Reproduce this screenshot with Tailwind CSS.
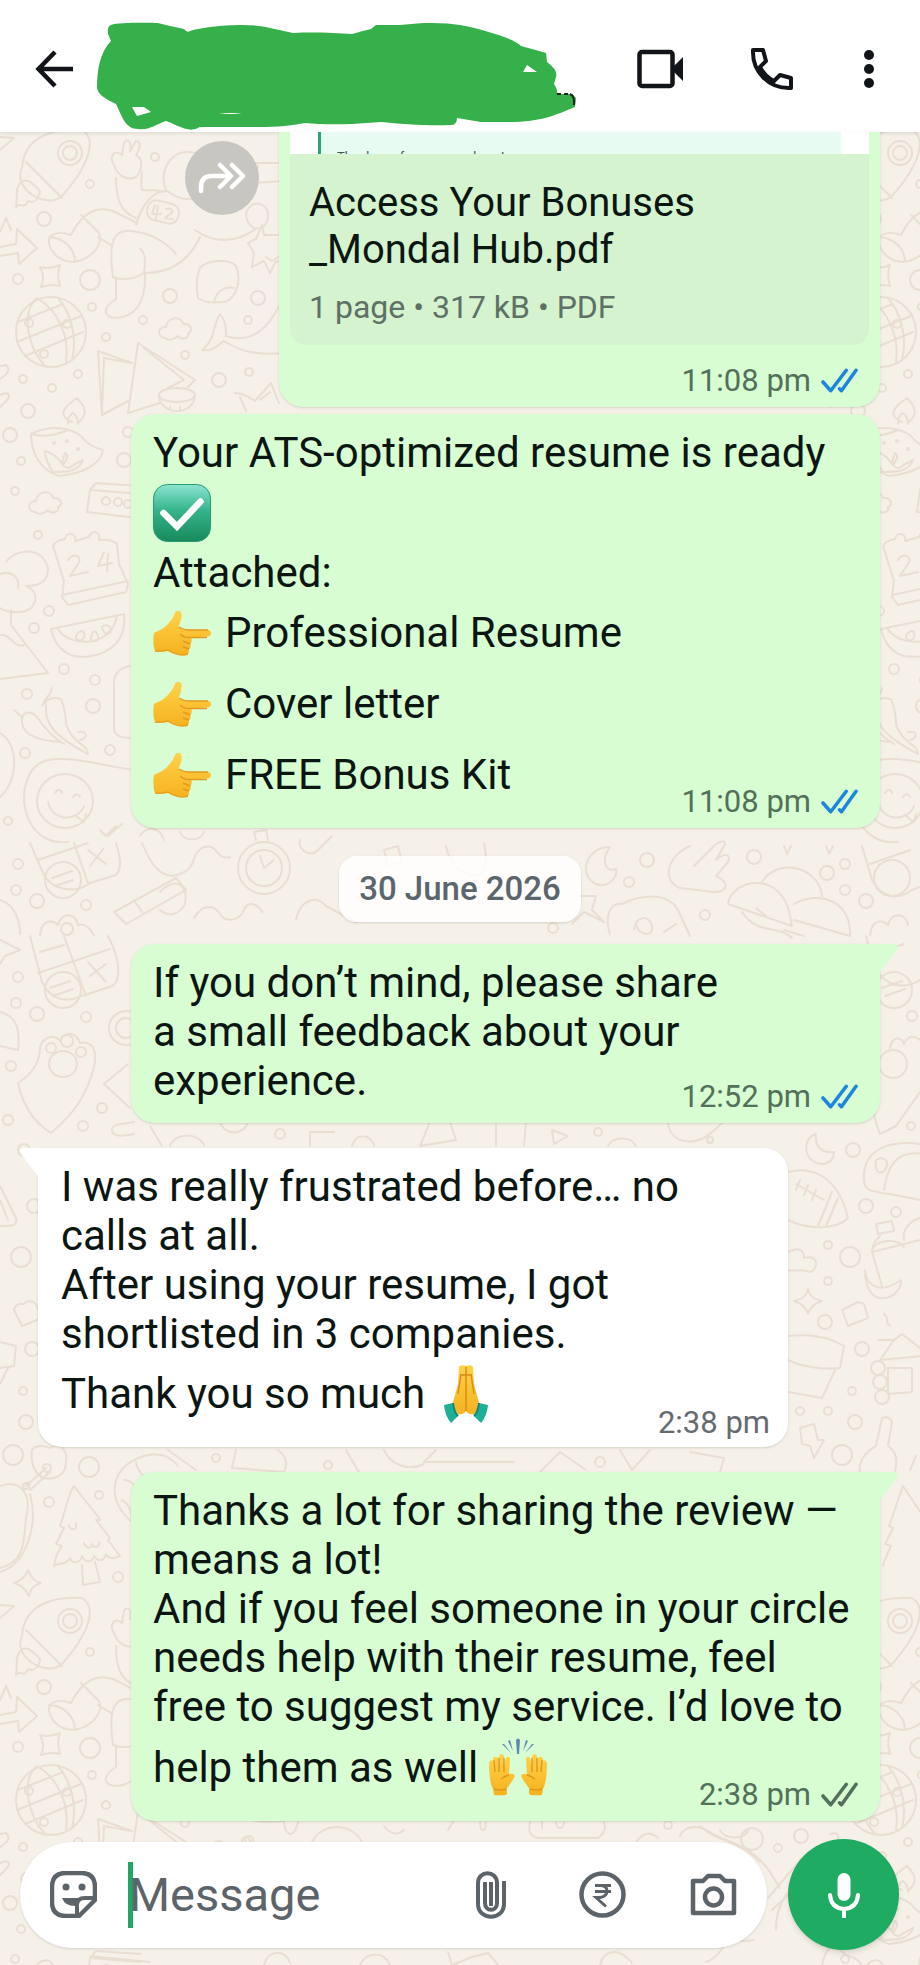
<!DOCTYPE html>
<html lang="en">
<head>
  <meta charset="UTF-8">
  <meta name="viewport" content="width=device-width, initial-scale=1.0">
  <title>Chat</title>
  <script src="https://cdn.jsdelivr.net/npm/@tailwindcss/browser@4"></script>
</head>
<body class="bg-[#f5f1e8] font-['Roboto','Liberation_Sans',sans-serif] text-[#0b1612]">

  <!-- Shared shapes -->
  <svg class="absolute size-0" aria-hidden="true">
    <defs>
      <linearGradient id="tickBox" x1="0" y1="0" x2="0" y2="1">
        <stop offset="0" stop-color="#8ce5d0"/><stop offset=".45" stop-color="#35b48c"/><stop offset="1" stop-color="#178a5c"/>
      </linearGradient>
      <linearGradient id="skin" x1="0" y1="0" x2="0" y2="1">
        <stop offset="0" stop-color="#ffd24a"/><stop offset="1" stop-color="#f5b21f"/>
      </linearGradient>
      <symbol id="ticks" viewBox="0 0 38 26">
        <path d="M2 14l8 9L26 2M19 21l2 2L36 2" fill="none" stroke="currentColor" stroke-width="3.6" stroke-linejoin="round" stroke-linecap="round"/>
      </symbol>
      <symbol id="point" viewBox="0 0 58 58">
        <path d="M1 22C4 20 9 19 13 15 18 10 20 7 22 2 23-1 28-1 28.500 3 29 8 27 12 25.500 16 29 18 33 19 37 19H55C59 19 59 25 55 25.500L38 26.500C39 29 39 31 37.500 33 38 35 37.500 37 36 38.500 36 41 35.500 42 35 43 C32 45 22 44 15 40 10 40 5 42 2 40 0 35 0 27 1 22z" transform="translate(0 7)" fill="url(#skin)"/>
        <path d="M26 23c3 2 6 3 11 3h18M38 33.500H54M27 30c3 3 6 4 11 3.500M30 37l7 3M30 43l6 2" fill="none" stroke="#e09a22" stroke-width="1.400"/>
        <path d="M2 47c4 1 8 0 13-1 6 4 14 6 20 4" fill="none" stroke="#e8a220" stroke-width="1.500"/>
      </symbol>
      <symbol id="cloud" viewBox="0 0 36 26"><path d="M8 22c-8-1-8-11 1-11 1-10 15-12 17-3 9-1 10 8 5 9 2 6-8 7-10 3-4 4-10 5-13 2z" fill="none"/></symbol>

      <!-- doodle tile, repeated across the wallpaper -->
      <g id="tileTop">
        <path d="M22 168c2-32 32-40 60-38 14 8 10 32-20 66-16 14-50-8-40-28zm4-6l36 36M22 181c-8 8-4 14-6 26 6-6 8 4 12-6 8 4 12-6 12-10-6-6-10-12-18-10z"/>
        <circle cx="70" cy="153" r="12"/><circle cx="70" cy="153" r="7"/>
        <path d="M114 165c-6-10 2-16 8-10l2-12c4-6 8 0 6 8l6-10c6 0 4 8 0 14 8 4 6 16 0 22-8 4-18 0-22-12zM116 178c0 20 4 34 20 40M142 172c-1 8-1 14 0 18 8 1 16-1 22 2M136 225c6-22 18-34 30-34M166 190c-8-20 6-40 24-38 20 2 26 20 20 40-10 10-30 10-44-2z"/>
        <rect x="147" y="202" width="32" height="20" rx="9" transform="rotate(14 163 212)"/>
        <path d="M155 205l-3 9h9m-3-8l-2 12M166 209c6-2 8 3 4 5l-5 4 8 1"/>
        <path d="M71 235c10-20 24-30 42-24l24 12M71 235c-18-6-26 2-20 14 8 14 26 18 42 4 8-8 8-14 6-20l-18-18M49 237c12 0 26 10 26 25M98 237l13 8M113 277c-4-30-2-48 18-46 20 2 34 10 45 23M113 277c10 4 22 2 31-4 2-14 0-22-4-24M144 273c20 0 42-6 56-36M116 279v20c-10 6-16 16-2 19 20 0 32-14 31-44M195 230c20 14 40 14 62-2M250 196c-2-10 2-16 8-30M246 215c2-16 22-14 22 0 0 18-20 18-22 0zM250 163h36v-3M250 163l3 20 30-2"/>
        <path d="M0 247l16-3 1-15 20 19-18 16-1-11-18 3M0 232l6-14 5 12M0 150l14-12-14-1"/>
        <path d="M40 267c8 2 14 1 20-2-3 7-2 14 0 21-7-2-13-1-19 1 3-7 3-13-1-20z"/>
        <path d="M200 268c6-8 30-10 36-2 6 14 0 34-12 36-10 0-18 2-26-4-2-12-2-22 2-30zM214 302c2-10 10-16 20-14"/>
        <path d="M280 235l-16 0-2-10-6 14-8 4 6 10-2 14 12-6 6 12 6-12 8 2M266 257l6 4 10-6"/>
        <circle cx="51" cy="332" r="35"/>
        <path d="M18 322l45-18M17 342l64-26M25 356l58-24M37 298c-16 14-10 48 8 68M40 300c16 10 30 34 26 62M58 298c12 14 20 38 14 62"/>
        <circle cx="29" cy="323" r="4"/><circle cx="67" cy="324" r="4"/><circle cx="44" cy="354" r="4"/>
        <path d="M98 351l4 64 26-14M98 351l34 12M104 358l-2 54M104 358l27 5M138 343l57 37-8 8M138 343l-10 70 32-10M144 348l40 32-16 8"/>
        <ellipse cx="177" cy="395" rx="18" ry="7"/><path d="M159 396c2 20 34 20 36 0M170 407v3M180 407v3"/>
        <path d="M202 350c14-10 10-24 18-36 6 8 6 12 6 22 24 8 42-6 55-34M202 350c12 2 16-6 22-9 18 12 36 14 60 12"/>
        <path d="M235 393c10 0 16 6 20 8l16-18 8 20M240 397l6 14M260 400l10-8"/>
        <path d="M72 422c-14-6-10-14 5-24 12 12 8 18 2 24M68 424c0-8 3-10 5-11 4 3 5 6 5 11M31 434c20-10 40-6 50 2 6 8 12 12 22 14-2 16-24 24-44 26-18-6-28-22-28-42zM31 434c16 4 26 0 38-4M45 451c8 2 12 6 18 14 4-6 6-10 2-12-4 10-4 14 4 15 6-4 10-6 14-8-4 12-18 12-30 12-4-6-8-14-8-21z"/>
        <circle cx="54" cy="443" r="1"/><circle cx="67" cy="441" r="1"/><circle cx="78" cy="449" r="1"/>
        <path d="M90 490l6-7 44 3M90 490l50 4M90 490l-3 22 50 6"/><circle cx="106" cy="501" r="4"/><circle cx="118" cy="502" r="4"/><circle cx="128" cy="504" r="4"/>
        <use href="#cloud" x="157" y="316" width="36" height="26"/><use href="#cloud" x="27" y="490" width="36" height="26"/>
        <circle cx="90" cy="184" r="4"/><circle cx="44" cy="219" r="7"/><circle cx="18" cy="279" r="5"/><circle cx="90" cy="280" r="10"/><circle cx="92" cy="307" r="4"/><circle cx="170" cy="296" r="7"/><circle cx="143" cy="320" r="4"/><circle cx="106" cy="337" r="4"/><circle cx="78" cy="374" r="4"/><circle cx="23" cy="379" r="4"/><circle cx="52" cy="388" r="4"/><circle cx="28" cy="411" r="7"/><circle cx="10" cy="435" r="7"/><circle cx="21" cy="461" r="4"/><circle cx="15" cy="491" r="4"/><circle cx="124" cy="460" r="7"/><circle cx="128" cy="432" r="5"/><circle cx="38" cy="535" r="4"/><circle cx="258" cy="298" r="7"/><circle cx="248" cy="320" r="4"/><circle cx="249" cy="372" r="4"/><circle cx="219" cy="380" r="7"/><circle cx="185" cy="355" r="4"/><circle cx="155" cy="157" r="4"/>
        <path d="M0 366l6-1c6 6 0 10-6 14M0 395c8-4 12 0 6 6l-6 6"/>
      </g>
      <g id="tileMid">
        <path d="M53 546c2-4 6-6 12-7 2-8 12-6 10 2l14-4c2-8 12-6 10 3 8-1 14 0 18 4l2 20 9 20-2 8-58 13-6-8 2-16zM62 595l66-14"/>
        <path d="M68 560c4-8 16-4 10 4l-8 12 18-4M104 552l-6 14 14-3M108 554l-1 17"/>
        <path d="M6 562c10-14 36-16 42 6 0 12-6 18-22 18 16 6 10 26-6 26-10 0-14 0-20-4M0 574c12-4 20 4 18 14M11 610v15l37 48-48 6M0 635c10-2 14 14 24 10"/>
        <path d="M51 629l73-15c4 36-30 46-50 42-14-4-20-14-23-27zM57 628c12 20 54 20 60-12"/><path d="M76 638c0-6 6-8 8-6 2 6-4 12-8 6zM91 640c0-6 2-10 5-8 4 6 2 12-5 8zM102 627c4-4 12 0 8 6-4 2-8-2-8-6z"/>
        <path d="M14 710c4 4 8 6 8 8-2 14 10 22 38 24M22 718c2-8 10-6 14-2 8 10 14 20 28 28M44 702c4-8 8-8 8-14M42 706c4-8 14-10 20-6M46 704c-2 20 8 32 42 50 0-10-16-10-22-30 0-12-2-16-4-22M78 732c10-2 10 6 2 8"/>
        <path d="M134 666c-12 0-20 6-20 16v46c0 6 4 10 16 10"/><path d="M134 770c-30-4-60-14-86-10-20 4-30 32-20 58 8 20 26 26 40 24"/>
        <ellipse cx="65" cy="801" rx="28" ry="27"/><path d="M55 793c2-4 6-4 7 0M73 797c3-4 6-3 7 0M48 802c4 20 30 20 36 4M76 816l8 6 2-8"/>
        <path d="M100 830l6 6 10-10M108 836l14-12"/>
        <circle cx="49" cy="611" r="5"/><circle cx="34" cy="628" r="5"/><circle cx="64" cy="669" r="5"/><circle cx="95" cy="680" r="5"/><circle cx="27" cy="694" r="5"/><circle cx="93" cy="706" r="7"/><circle cx="25" cy="753" r="5"/><circle cx="110" cy="750" r="5"/><circle cx="8" cy="821" r="4"/>
        <path d="M0 733c18 10 20 46 0 64"/>
      </g>
      <g id="tileLow">
        <path d="M30 936l12 46c10 20 26 20 40 14l30-10c8-4 10-24-4-50M38 973l72-24M64 936l22 60M40 952l24-7M88 962l18 20M106 964l-16 12"/>
        <circle cx="63" cy="990" r="18"/><path d="M50 988l20-7M53 996l20-7"/>
        <path d="M18 1083c16-10 22-22 22-36 4-12 16-12 20-6 4-10 16-10 20 2 12-2 18 6 14 24-8 32-24 50-43 66-16-10-28-26-33-50z"/>
        <ellipse cx="63" cy="1064" rx="14" ry="13"/><circle cx="51" cy="1048" r="5"/><circle cx="67" cy="1041" r="6"/><circle cx="81" cy="1052" r="5"/>
        <path d="M0 940l20 10-15 6-5 8M0 1012c18 4 20 20 18 38l-18-4M128 1064l-24 20 26 24M112 1130c0-6 6-5 22-8M112 1130c0 4 4 8 22 4"/>
        <circle cx="126" cy="1028" r="17"/><circle cx="126" cy="1028" r="10"/>
        <circle cx="18" cy="977" r="5"/><circle cx="16" cy="1003" r="5"/><circle cx="37" cy="1014" r="7"/><circle cx="86" cy="1017" r="5"/><circle cx="11" cy="1066" r="5"/><circle cx="8" cy="1120" r="5"/><circle cx="83" cy="1126" r="5"/><circle cx="102" cy="1108" r="5"/><circle cx="24" cy="1150" r="6"/>
        <path d="M0 1186l16 32c2 8-4 8-16 8M0 1200l8 20M0 1342l16 4-2 20-14 2M8 1368l-8 16M14 1310c2-8 8-6 10-6 2-4 8-4 12 0l6 14-20 8z"/>
        <circle cx="21" cy="1257" r="10"/><circle cx="34" cy="1206" r="7"/><circle cx="32" cy="1349" r="7"/><circle cx="23" cy="1391" r="4"/><circle cx="26" cy="1422" r="7"/><circle cx="13" cy="1455" r="10"/><circle cx="89" cy="1467" r="10"/>
        <path d="M32 1450c4-6 14-4 18-2 10-6 18 2 16 14 0 14-12 18-22 16-8-2-14-14-12-28zM46 1468l-20 18M50 1472l-20 18"/><circle cx="47" cy="1468" r="4"/><circle cx="26" cy="1486" r="3"/>
        <path d="M0 1486c22-8 32 10 26 32-2 26-2 44-26 50M30 1494c8 28-2 70-30 78"/>
        <path d="M74 1486c10 14 20 24 26 34l-4 0 14 18-2 2 12 16c-8 4-12 2-14-2-2 8-8 8-12 2-2 8-10 6-12 0-2 8-10 8-12 2-4 8-12 4-16 8 2-12 4-14 8-20l-6-2 8-16-4-2c6-16 8-32 14-40zM82 1565l1 20 17-3-5-20M69 1525c0 6 8 6 7-2M84 1543c2 6 8 6 8 1 2 6 8 2 7-2"/>
        <circle cx="49" cy="1502" r="5"/><circle cx="99" cy="1495" r="4"/><circle cx="118" cy="1577" r="5"/>
        <path d="M14 1583c6-2 10-4 14-13 4 9 6 11 13 13-6 2-10 4-12 13-4-8-8-11-15-13z"/>
        <path d="M134 1524c-30-24-24-58 10-68 14-4 26 0 34 10M122 1500c10 6 10 16 10 20M124 1480c10 0 14 10 16 14M136 1462c2 10 8 16 16 18"/>
      </g>
      <clipPath id="lowerPart"><rect x="0" y="1596" width="2000" height="800"/></clipPath>
      <clipPath id="upperPart"><rect x="0" y="130" width="2000" height="713"/></clipPath>
    </defs>
  </svg>

  <div class="relative isolate flex min-h-screen flex-col">

    <!-- Wallpaper -->
    <svg class="absolute inset-0 -z-10 h-full w-full" fill="none" stroke="#eaded3" stroke-width="2" stroke-linejoin="round" stroke-linecap="round" aria-hidden="true">
      <g clip-path="url(#upperPart)">
        <use href="#tileTop"/><use href="#tileTop" x="830"/>
        <use href="#tileMid"/><use href="#tileMid" x="830"/>
      </g>
      <use href="#tileLow"/>
      <g clip-path="url(#lowerPart)"><use href="#tileTop" y="1468"/><use href="#tileTop" x="830" y="1468"/></g>

      <!-- band around the date -->
      <path d="M30 843l14 32c8 14 30 20 46 8l26-8c6-6 4-20 0-32M38 860l50-17M74 843l14 40M88 850l18 14M104 848l-14 18M40 935c2-18 14-14 18-10 4-14 18-12 20 0 8-2 12 4 16 10"/><circle cx="63" cy="880" r="18"/><path d="M52 878l20-7M55 886l18-6"/><circle cx="67" cy="929" r="6"/>
      <circle cx="18" cy="864" r="5"/><circle cx="16" cy="890" r="5"/><circle cx="37" cy="901" r="7"/><circle cx="86" cy="905" r="5"/><path d="M0 900c14 4 20 20 20 34"/>
      <path d="M142 843c8 20 20 40 40 30 16-6 8-20 22-26 14-4 12 14 26 10M114 912l62-34 10 12-60 34zM134 900l8 12M160 892c20-20 30 0 24 14-6 8-14 12-24 4"/>
      <circle cx="264" cy="868" r="26"/><circle cx="264" cy="868" r="18"/><path d="M264 868l10-8M264 868l-4-12M256 840l-2-8 12-2 2 10"/>
      <path d="M140 836c8-12 20-8 24 4M180 832c4 10 20 10 24 0M300 840c-2 10 10 18 18 10l14-14M384 850l14-4 4 16-14 4zM446 846c4 20 20 34 36 28 6-10 4-20 2-30M296 920c4-20 20-26 30-14l30 16M194 918c8-14 20-14 26-4s20 6 24-4 14-6 18 2"/>
      <path d="M610 847c-14 0-24 10-24 22 0 10 10 18 18 16 8-2 14-10 12-16-10 4-16-8-6-22zM690 846c-24 10-28 36-10 42l34 4c14 0 16-10 2-16l12-14c4-8-4-10-12-2l8-14c4-6-4-6-10 0l-20 20M610 934c-6-16 0-32 12-30 20-10 46-12 56 6l12 26M634 930c0-14 16-16 18-4s-16 10-16-4M664 932l12-8"/>
      <path d="M728 904c4-26 54-34 62 12l2 10zM762 882c16-26 58-14 60 14M794 904c24-14 58-4 56 32l-56-16M742 912c16 24 36 12 50 26M756 908l10 8M784 930l20 6"/>
      <circle cx="647" cy="860" r="7"/><circle cx="754" cy="857" r="7"/><circle cx="629" cy="882" r="5"/><circle cx="705" cy="915" r="5"/><circle cx="827" cy="873" r="7"/><circle cx="845" cy="864" r="5"/><circle cx="845" cy="890" r="5"/><circle cx="553" cy="928" r="5"/><circle cx="866" cy="901" r="7"/>
      <path d="M576 896l20 0-4 14 12 12-20-10-12 12M784 846l3 8 4-8M826 846l3 8 4-8M862 846l10 34c8 16 24 22 40 10l14-6M870 864l40-14M870 935c2-18 14-14 18-10 4-14 18-12 20 0"/><circle cx="892" cy="878" r="18"/>

      <!-- thin gaps between the bubbles -->
      <path d="M150 1126l12 20M170 1146c4-14 30-14 34 0M220 1122c4 14 24 14 28 0M310 1146v-14h24M352 1146c4-14 20-12 22 0M430 1122l-10 24 36-6-6-18M496 1122v24M526 1122l-2 24M552 1130l16 6-14 8zM668 1122c2 24 30 24 44 10l14-12M608 1146c4-10 24-10 28 0"/>
      <circle cx="598" cy="1132" r="4"/><circle cx="710" cy="1140" r="3"/><circle cx="280" cy="1134" r="5"/>
      <path d="M168 1450l28 20M236 1450l-4 18 52 4c4-8 2-16-6-22M346 1450l14 24M384 1450c6 14 24 22 40 14M436 1450l-12 12 90 0M540 1472l20-20 26 18M620 1450l12 20 18-20M690 1452l34 6-4 14"/><circle cx="216" cy="1458" r="4"/><circle cx="328" cy="1465" r="4"/><circle cx="600" cy="1462" r="5"/>

      <!-- right edge -->
      <path d="M866 936l6 24c8 24 28 32 48 20M864 958l40-14M868 1092c6 20 8 34 12 42l16-8 24-34M890 1048c2-12 12-12 14-4 4-10 12-8 16-4"/>
      <circle cx="894" cy="990" r="18"/><path d="M882 988l20-7M885 996l20-7"/><circle cx="893" cy="1064" r="14"/><circle cx="912" cy="1016" r="5"/>
      <path d="M816 1134c-14 4-14 28 6 30 8 0 12-6 12-12-12 2-20-6-18-18zM788 1172c24-6 50 4 60 46-12 12-40 12-60 2M796 1184l28 16M800 1180l-4 10M808 1185l-4 10M816 1190l-4 10M832 1192l-14 34M838 1198l-12 28"/>
      <path d="M864 1180c-2-30 24-40 56-36M864 1180c0 14 10 10 56 20M884 1190c4-30 18-40 40-36M876 1160c6-4 14 0 10 8s-12 6-10-8zM872 1252c0-14 30-14 32-4M872 1252l10 34M872 1252l48-12M876 1224l16-3 2 10-16 3zM865 1270c0 10 10 28 36 10 2 18-36 34-36-10zM880 1236c-4 4-8 8-8 16M904 1240c-2-12 8-20 16-22"/>
      <path d="M788 1252c16-8 16 4 16 6 16-4 14 12 6 14-8-4-14 0-22-2M794 1301c8-2 12-4 14-12 2 8 6 10 14 12-8 2-12 6-14 13-2-7-6-11-14-13zM842 1310l16-8 6 2 4 14-20 8zM788 1336c20-2 40 0 56 10l-4 22c-20 2-40-2-52-8M836 1368l-14 30-34-6M884 1314c6 4 0 8 6 12M878 1340h16l-14 20 42-4M894 1340l8-6 18 14M888 1368h24v24l-24 2z"/>
      <circle cx="878" cy="1368" r="7"/><circle cx="880" cy="1382" r="7"/><circle cx="882" cy="1397" r="7"/>
      <path d="M800 1428l14-4 4 16 6 0-10 18-4-12-8-2zM882 1418c6-2 8 0 10 4l-4 24c12 8 8 20 6 30M882 1418l-6 28c-12 6-18 18-16 26"/>
      <circle cx="853" cy="1150" r="7"/><circle cx="866" cy="1206" r="7"/><circle cx="896" cy="1212" r="5"/><circle cx="828" cy="1245" r="4"/><circle cx="850" cy="1257" r="10"/><circle cx="828" cy="1281" r="4"/><circle cx="825" cy="1322" r="7"/><circle cx="862" cy="1349" r="7"/><circle cx="852" cy="1391" r="4"/><circle cx="800" cy="1411" r="4"/><circle cx="828" cy="1411" r="4"/><circle cx="855" cy="1422" r="7"/><circle cx="842" cy="1455" r="10"/><circle cx="911" cy="1126" r="4"/>
      <path d="M903 1486c-6 16-10 30-14 40l4 2-8 16 6 2c-4 8-6 12-8 20M903 1486l20 30M916 1456l-6 14"/>

      <!-- around the composer -->
      <path d="M284 1822c2 16 10 16 14 0M312 1842c10-20 40-20 50 0M384 1826c6 8 14 10 20 4M448 1830l6-10M480 1822c0 12 6 10 6 0M530 1822c-2 10 0 14 8 16h60c6-4 8-10 6-16M542 1822v6M556 1822c0 8 8 8 8 0M636 1842c6-8 14-12 22-4M680 1836c4-10 18-12 30-4 12 10 40 10 60 40l10 16M700 1826c16 16 40 14 60 36M720 1830c4 10 26 10 28 0M768 1898l34-40M772 1910l26-24M776 1930c0-30 16-50 44-52M840 1870l14 2-4 8"/>
      <circle cx="752" cy="1839" r="11"/><circle cx="801" cy="1836" r="7"/><circle cx="778" cy="1848" r="4"/><circle cx="246" cy="1841" r="4"/><circle cx="668" cy="1825" r="4"/>
      <path d="M90 1956l60 6M264 1965c4-16 22-16 26-2M360 1965c6-14 24-14 30 0M448 1952l4 13 20-8 16-4 10 12M600 1965c4-16 20-18 32-2M706 1962c14-4 20-22 28-30 6 4 0 12 20 8M822 1965c4-18 10-24 24-10 14 4 16 10 14 10"/>
    </svg>

    <header class="flex h-33 items-center bg-white pr-[45px] pl-[30px] shadow-[0_2px_3px_rgba(0,0,0,0.08)]">
      <button type="button" aria-label="Back" class="mt-1.5 shrink-0">
        <svg class="size-12" viewBox="0 0 48 48" fill="none" stroke="#111418" stroke-width="4.500"><path d="M43 24H9M25 7L8.500 24 25 41"/></svg>
      </button>
      <svg class="mt-5 ml-[18px] h-[110px] w-[481px] shrink-0" viewBox="96 21 481 110" role="img" aria-label="Contact name hidden">
        <path d="M111 25C120 22 150 23 158 23L170 26 184 29Q187 33 190 31C205 26 250 22 270 28L293 33C315 32 335 33 352 34Q362 31 371 29L376 25 400 25C440 20 465 25 478 29 500 35 515 40 521 46Q536 50 546 53L547 62Q558 70 556 77L554 84Q558 90 557 94H572L576 98 575 107C560 113 545 121 515 122H481L457 118Q457 126 449 125C430 126 400 124 381 122L352 124Q325 125 305 123C285 127 270 127 255 127H200Q193 131 187 129C180 128 173 123 166 121 157 124 147 131 138 129 125 129 122 116 116 104 106 99 98 95 97 88 97 70 100 52 111 41L108 34Q107 26 111 25Z" fill="#35b04a"/>
        <path d="M132 107l12 0 7 5-14 4zM527 65l10 7h-14zM219 114q12-2 23 0z" fill="#fff"/>
        <path d="M557 94h4M564 94h4M570 94q5 2 4 11" stroke="#222" stroke-width="2" fill="none"/>
      </svg>
      <div class="mt-1.5 ml-auto flex items-center">
        <button type="button" aria-label="Video call">
          <svg class="h-10 w-12" viewBox="0 0 48 40"><rect x="3.500" y="3" width="33" height="34" rx="2.500" fill="none" stroke="#111418" stroke-width="4.500"/><path d="M37 18l10-10v24L37 22z" fill="#111418"/></svg>
        </button>
        <button type="button" aria-label="Voice call" class="ml-[64px]">
          <svg class="size-12" viewBox="0 0 48 48" fill="none" stroke="#111418" stroke-width="4" stroke-linejoin="round"><path d="M5 5h10l3 11-6 6c3 6 8 11 14 14l6-6 11 3v10c-22 1-39-16-38-38z"/></svg>
        </button>
        <button type="button" aria-label="More options" class="ml-[67px]">
          <svg class="h-10 w-3" viewBox="0 0 12 40" fill="#111418"><circle cx="6" cy="6" r="5"/><circle cx="6" cy="20" r="5"/><circle cx="6" cy="34" r="5"/></svg>
        </button>
      </div>
    </header>

    <main class="flex flex-1 flex-col pr-10 text-[42px] leading-[49px]">

      <!-- Shared document -->
      <div class="flex items-start">
        <button type="button" aria-label="Forward" class="mt-[9px] ml-[185px] flex size-[74px] shrink-0 items-center justify-center rounded-full bg-[#c5c3bf]/95">
          <svg class="h-8 w-12" viewBox="0 0 48 32" fill="none" stroke="#fff" stroke-width="4.500" stroke-linecap="round" stroke-linejoin="round"><path d="M3 29v-4c0-8 4-11 11-11h18M22 3l11 11-11 11M34 3l11 11-11 11"/></svg>
        </button>
        <div class="ml-5 flex-1 rounded-b-3xl bg-[#d8fdd2] px-[11px] pb-2 shadow-sm">
          <a href="#" class="block rounded-b-2xl bg-[#d5f3cf] pb-[18px]">
            <div class="h-[22px] bg-white pr-7 pl-7">
              <div class="h-full overflow-hidden border-l-3 border-[#2aa37c] bg-[#e8fbf3] pt-[17px] pl-4 text-[13px] leading-4 text-[#3c5a50]">Thank you for your purchase!</div>
            </div>
            <div class="px-[19px] pt-[25px]">
              <div class="text-[40px] leading-[47px]">Access Your Bonuses<br>_Mondal Hub.pdf</div>
              <div class="mt-[14px] text-[32px] leading-[40px] text-[#5f7066]">1 page • 317 kB • PDF</div>
            </div>
          </a>
          <div class="mt-[18px] flex items-center justify-end gap-2.5 pr-[11px] text-[31px] leading-9 text-[#52705a]">
            <time>11:08 pm</time>
            <svg class="h-[26px] w-[37px] text-[#1c86dc]" role="img" aria-label="Read"><use href="#ticks"/></svg>
          </div>
        </div>
      </div>

      <div class="mt-[7px] ml-[131px] rounded-3xl bg-[#d8fdd2] px-[22px] pt-3.5 pb-2 shadow-sm">
        <p>Your ATS-optimized resume is ready</p>
        <div class="mt-[11px] flex h-[49px] items-center">
          <svg class="size-[58px] shrink-0" viewBox="0 0 58 58" role="img" aria-label="Check mark">
            <rect x=".5" y=".5" width="57" height="57" rx="14" fill="url(#tickBox)" stroke="#2a9a74"/>
            <path d="M10.500 29L24 42.500 47.500 17.500" fill="none" stroke="#fff" stroke-width="6.500" stroke-linecap="round"/>
          </svg>
        </div>
        <p class="mt-[11px]">Attached:</p>
        <p class="mt-[11px] flex h-[49px] items-center gap-[14px]"><svg class="size-[58px] shrink-0" role="img" aria-label="Pointing right"><use href="#point"/></svg>Professional Resume</p>
        <p class="mt-[22px] flex h-[49px] items-center gap-[14px]"><svg class="size-[58px] shrink-0" role="img" aria-label="Pointing right"><use href="#point"/></svg>Cover letter</p>
        <div class="mt-[22px] flex items-end justify-between">
          <p class="mb-[21px] flex h-[49px] items-center gap-[14px]"><svg class="size-[58px] shrink-0" role="img" aria-label="Pointing right"><use href="#point"/></svg>FREE Bonus Kit</p>
          <div class="flex items-center gap-2.5 text-[31px] leading-9 text-[#52705a]">
            <time>11:08 pm</time>
            <svg class="h-[26px] w-[37px] text-[#1c86dc]" role="img" aria-label="Read"><use href="#ticks"/></svg>
          </div>
        </div>
      </div>

      <div class="mt-7 -mr-10 self-center rounded-[18px] bg-white/85 px-5 py-3 text-[33px] leading-[42px] font-medium text-[#5b656c] shadow-sm">30 June 2026</div>

      <div class="relative mt-[22px] ml-[131px] rounded-3xl rounded-tr-none bg-[#d8fdd2] px-[22px] pt-3.5 pb-2 shadow-sm">
        <svg class="absolute top-0 left-full h-[28px] w-[18px]" viewBox="0 0 18 28" fill="#d8fdd2" aria-hidden="true"><path d="M0 0h14q6 1 3 6L0 28z"/></svg>
        <p>If you don’t mind, please share<br>a small feedback about your</p>
        <div class="flex items-end justify-between">
          <p class="mb-[10px]">experience.</p>
          <div class="flex items-center gap-2.5 text-[31px] leading-9 text-[#52705a]">
            <time>12:52 pm</time>
            <svg class="h-[26px] w-[37px] text-[#1c86dc]" role="img" aria-label="Read"><use href="#ticks"/></svg>
          </div>
        </div>
      </div>

      <div class="relative mt-[25px] mr-[92px] ml-[38px] rounded-3xl rounded-tl-none bg-white pt-3.5 pr-[18px] pb-1.5 pl-[23px] shadow-sm">
        <svg class="absolute top-0 right-full h-[28px] w-[18px]" viewBox="0 0 18 28" fill="#fff" aria-hidden="true"><path d="M18 0H4q-6 1-3 6l17 22z"/></svg>
        <p>I was really frustrated before… no<br>calls at all.<br>After using your resume, I got<br>shortlisted in 3 companies.</p>
        <div class="mt-[11px] flex items-end justify-between">
          <p class="mb-[23px] flex h-[49px] items-center gap-3">Thank you so much
            <svg class="size-[58px] shrink-0" viewBox="0 0 58 58" role="img" aria-label="Folded hands">
              <path d="M22 2q2-3 7-1 5-2 7 1l1 17 6 22-6 8q-5 1-8-3-3 4-8 3l-6-8 6-22z" fill="url(#skin)"/>
              <path d="M29 2v44M23 10h12M24 9l-3 20M34 9l3 20" fill="none" stroke="#d98c18" stroke-width="1.500"/>
              <path d="M7 40l9-2q1 9 5 13l-7 7q-6-7-7-18zM51 40l-9-2q-1 9-5 13l7 7q6-7 7-18z" fill="#1fae97"/>
              <path d="M16 38q1 9 5 13M42 38q-1 9-5 13" fill="none" stroke="#0f8577" stroke-width="2"/>
            </svg>
          </p>
          <time class="text-[31px] leading-9 text-[#666b6f]">2:38 pm</time>
        </div>
      </div>

      <div class="relative mt-[25px] ml-[131px] rounded-3xl rounded-tr-none bg-[#d8fdd2] px-[22px] pt-3.5 pb-2 shadow-sm">
        <svg class="absolute top-0 left-full h-[28px] w-[18px]" viewBox="0 0 18 28" fill="#d8fdd2" aria-hidden="true"><path d="M0 0h14q6 1 3 6L0 28z"/></svg>
        <p>Thanks a lot for sharing the review —<br>means a lot!<br>And if you feel someone in your circle<br>needs help with their resume, feel<br>free to suggest my service. I’d love to</p>
        <div class="mt-3 flex items-end justify-between">
          <p class="mb-[21px] flex h-[49px] items-center gap-2.5">help them as well
            <svg class="size-[60px] shrink-0" viewBox="0 0 60 60" role="img" aria-label="Raised hands">
              <g id="raised">
                <path d="M1 23q1-4 4-2l1 8-1-10q1-4 5-1l1 9 0-11q2-4 5 0l0 11 2-9q3-3 4 1l-1 15q5-1 6 2-3 6-8 12v6q-1 2-13 1l-1-6Q1 42 1 23z" transform="translate(0 2)" fill="url(#skin)"/>
                <path d="M6 22l1 12M11 20v14M16 20v14M13 41q4-3 8-4M6 51q6 2 12 0" fill="none" stroke="#df961c" stroke-width="1.400"/>
              </g>
              <use href="#raised" transform="translate(60 0) scale(-1 1)"/>
              <path d="M28 2q2-3 4 0l-1 14h-2zM20 3l2-1 3 11zM40 3l-2-1-3 11zM14 6l2 0 7 9zM46 6l-2 0-7 9z" fill="#5e86b8"/>
            </svg>
          </p>
          <div class="flex items-center gap-2.5 text-[31px] leading-9 text-[#52705a]">
            <time>2:38 pm</time>
            <svg class="h-[26px] w-[37px]" role="img" aria-label="Delivered"><use href="#ticks"/></svg>
          </div>
        </div>
      </div>
    </main>

    <form class="flex items-center gap-[21px] pt-[17px] pr-[21px] pb-[15px] pl-5">
      <div class="flex h-[106px] flex-1 items-center rounded-full bg-white pr-[30px] pl-[30px] text-[#5c6369] shadow-sm">
        <button type="button" aria-label="Stickers" class="shrink-0">
          <svg class="size-[47px]" viewBox="0 0 47 47"><path d="M16 2h15q14 0 14 14v13L29 45H16Q2 45 2 31V16Q2 2 16 2z" fill="none" stroke="currentColor" stroke-width="4.500" stroke-linejoin="round"/><circle cx="16" cy="16" r="3.500" fill="currentColor"/><circle cx="32" cy="16" r="3.500" fill="currentColor"/><path d="M12 27h22l-6 4v13q-2-3-3-9-10 0-13-8z" fill="currentColor"/><path d="M27 44V34q0-7 8-7h10" fill="none" stroke="currentColor" stroke-width="4"/></svg>
        </button>
        <span class="ml-[31px] h-[66px] w-[5px] shrink-0 bg-[#22a566]"></span>
        <input type="text" placeholder="Message" aria-label="Message" class="-ml-1 w-0 flex-1 bg-transparent text-[47px] leading-[66px] outline-none placeholder:text-[#5c6369]">
        <button type="button" aria-label="Attach">
          <svg class="h-12 w-[30px]" viewBox="0 0 30 48" fill="none" stroke="currentColor" stroke-width="4" stroke-linecap="square"><path d="M28 12v21c0 17-26 17-26 0V12C2-1 21-1 21 12v20c0 9-12 9-12 0V13M15 13v20"/></svg>
        </button>
        <button type="button" aria-label="Payment" class="ml-[73px]">
          <svg class="size-[47px]" viewBox="0 0 47 47" fill="none" stroke="currentColor"><circle cx="23.500" cy="23.500" r="21" stroke-width="4.500"/><path d="M16 14.500h16M16 20.500h16M17 14.500h4q7 0 7 5.500t-7 6.500h-4l10 9" stroke-width="3"/></svg>
        </button>
        <button type="button" aria-label="Camera" class="ml-[64px]">
          <svg class="size-[47px]" viewBox="0 0 47 47" fill="none" stroke="currentColor" stroke-width="4.500" stroke-linejoin="round"><path d="M3 10h10l5-5h12l5 5h9v32H3z"/><circle cx="23.500" cy="26" r="8.500"/></svg>
        </button>
      </div>
      <button type="button" aria-label="Voice message" class="flex size-[111px] shrink-0 items-center justify-center rounded-full bg-[#1fab61] shadow-md">
        <svg class="h-[46px] w-8" viewBox="0 0 32 46"><rect x="9.500" y="1" width="13" height="28" rx="6.500" fill="#fff"/><path d="M2 23q1 13 14 14 13-1 14-14M16 37v8" fill="none" stroke="#fff" stroke-width="4" stroke-linecap="round"/></svg>
      </button>
    </form>
  </div>
</body>
</html>
